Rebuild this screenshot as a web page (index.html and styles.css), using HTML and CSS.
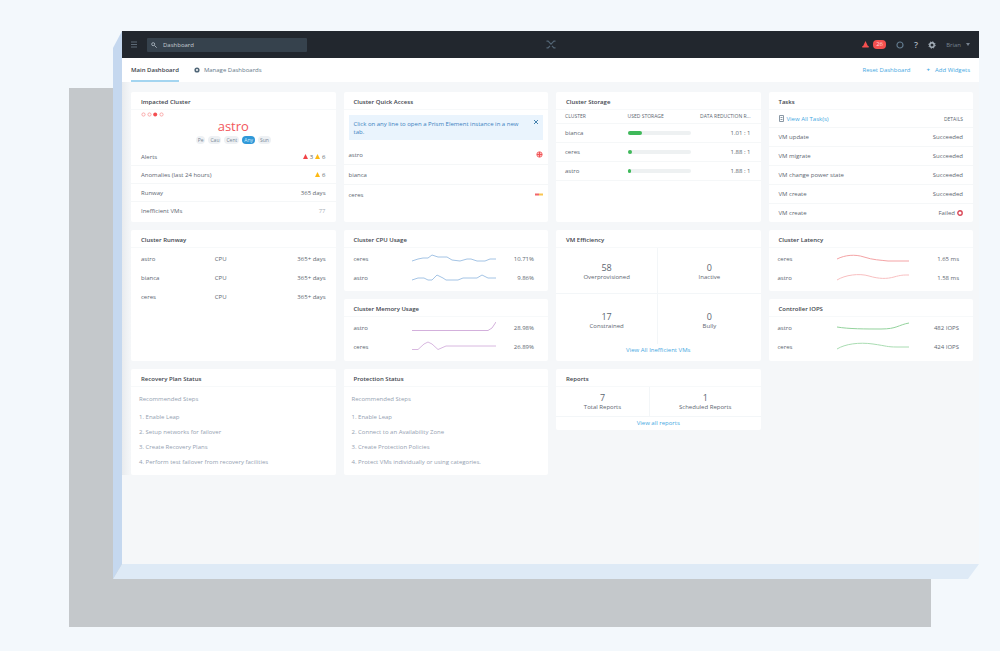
FILE: index.html
```html
<!DOCTYPE html>
<html lang="en">
<head>
<meta charset="utf-8">
<title>Main Dashboard</title>
<link rel="stylesheet" href="styles.css">
</head>
<body>
<div class="stage">
<div class="window">
  <header class="topbar">
    <button class="icon-btn" aria-label="Menu"><svg width="6" height="7" viewBox="0 0 6 7"><path d="M0 1h6M0 3.5h6M0 6h6" stroke="#5d6a77"/></svg></button>
    <div class="search">
      <svg width="6" height="6" viewBox="0 0 6 6" fill="none" stroke="#a0abb5"><circle cx="2.2" cy="2.2" r="1.5"/><path d="M3.4 3.4L5.7 5.7"/></svg>
      <input type="text" value="Dashboard" aria-label="Search">
    </div>
    <svg class="logo" width="10" height="9" viewBox="0 0 10 9" fill="none" stroke="#536575" stroke-width="1.2"><path d="M.5 1.2h1.6L5 4.2l2.9-3h1.6M.5 7.8h1.6L4 5.8M9.5 7.8H7.9L6 5.8"/></svg>
    <div class="tools">
      <button class="icon-btn alarm" aria-label="Alerts"><svg width="7" height="7" viewBox="0 0 7 7"><path d="M3.5 0L6 5.3H1zM.3 5h6.4v1.4H.3z" fill="#f5504f"/></svg><span class="badge">26</span></button>
      <button class="icon-btn" aria-label="Tasks"><svg width="8" height="8" viewBox="0 0 8 8"><circle cx="4" cy="4" r="3" fill="none" stroke="#627a8d" stroke-width="1.2"/></svg></button>
      <button class="icon-btn help" aria-label="Help">?</button>
      <button class="icon-btn" aria-label="Settings"><svg width="8" height="8" viewBox="0 0 8 8" fill="none" stroke="#a9b4be"><circle cx="4" cy="4" r="2.2" stroke-width="1.4"/><circle cx="4" cy="4" r="3.2" stroke-dasharray="1.25 1.25"/></svg></button>
      <button class="icon-btn user">Brian <svg width="4" height="3" viewBox="0 0 4 3"><path d="M0 0h4L2 3z" fill="#76828e"/></svg></button>
    </div>
  </header>
  <nav class="tabs">
    <a class="tab active" href="#main">Main Dashboard</a>
    <a class="tab" href="#manage"><svg width="6" height="6" viewBox="0 0 6 6"><circle cx="3" cy="3" r="1.8" fill="none" stroke="#516778" stroke-width="1.6"/></svg>Manage Dashboards</a>
    <span class="spacer"></span>
    <a class="link" href="#reset">Reset Dashboard</a>
    <a class="link add" href="#add"><b>+</b>Add Widgets</a>
  </nav>
  <main class="grid">
    <section class="card double">
      <h2>Impacted Cluster</h2>
      <div class="impact">
        <svg width="23" height="5" viewBox="0 0 23 5" fill="none" stroke="#f9a9a9"><circle cx="2.5" cy="2.5" r="1.6"/><circle cx="8.5" cy="2.5" r="1.6"/><circle cx="14.2" cy="2.5" r="2" fill="#f44d50" stroke="none"/><circle cx="20.5" cy="2.5" r="1.6"/></svg>
        <p class="cluster">astro</p>
        <div class="pills"><button>Pe</button><button>Cau</button><button>Cent</button><button class="on">Any</button><button>Sun</button></div>
      </div>
      <ul class="rows tight">
        <li><span>Alerts</span><span class="marks"><svg width="5" height="5" viewBox="0 0 5 5"><path d="M2.5 0L5 5H0z" fill="#f14347"/></svg>3<svg width="5" height="5" viewBox="0 0 5 5"><path d="M2.5 0L5 5H0z" fill="#fdb913"/></svg>6</span></li>
        <li><span>Anomalies (last 24 hours)</span><span class="marks"><svg width="5" height="5" viewBox="0 0 5 5"><path d="M2.5 0L5 5H0z" fill="#fdb913"/></svg>6</span></li>
        <li><span>Runway</span><span>365 days</span></li>
        <li><span>Inefficient VMs</span><span class="pale">77</span></li>
      </ul>
    </section>

    <section class="card double">
      <h2>Cluster Quick Access</h2>
      <div class="notice"><p>Click on any line to open a Prism Element instance in a new tab.</p><button aria-label="Close"><svg width="4" height="4" viewBox="0 0 4 4"><path d="M0 0l4 4M4 0L0 4" stroke="#4682ae"/></svg></button></div>
      <ul class="rows quick">
        <li><span>astro</span><svg width="7" height="7" viewBox="0 0 7 7"><circle cx="3.5" cy="3.5" r="2.7" fill="#fbb" stroke="#f46e70"/><path d="M1 3.5h5M3.5 1v5" stroke="#ed5558"/></svg></li>
        <li><span>bianca</span></li>
        <li><span>ceres</span><svg width="8" height="3" viewBox="0 0 8 3"><path d="M0 1.5h4" stroke="#f2666b" stroke-width="2"/><path d="M4 1.5h4" stroke="#f9c550" stroke-width="2"/></svg></li>
      </ul>
    </section>

    <section class="card double">
      <h2>Cluster Storage</h2>
      <table class="storage">
        <thead><tr><th>CLUSTER</th><th>USED STORAGE</th><th>DATA REDUCTION R...</th></tr></thead>
        <tbody>
          <tr><td>bianca</td><td><div class="meter"><div style="width:23%"></div></div></td><td>1.01 : 1</td></tr>
          <tr><td>ceres</td><td><div class="meter"><div style="width:7%"></div></div></td><td>1.88 : 1</td></tr>
          <tr><td>astro</td><td><div class="meter"><div style="width:5%"></div></div></td><td>1.88 : 1</td></tr>
        </tbody>
      </table>
    </section>

    <section class="card double">
      <h2>Tasks</h2>
      <div class="taskhead"><a class="link" href="#tasks"><svg width="5" height="7" viewBox="0 0 5 7"><path d="M.5.5h4v6h-4zM1.5 2.5h2M1.5 4.5h2" fill="none" stroke="#8a98a5"/></svg>View All Task(s)</a><span>DETAILS</span></div>
      <ul class="rows">
        <li><span>VM update</span><span>Succeeded</span></li>
        <li><span>VM migrate</span><span>Succeeded</span></li>
        <li><span>VM change power state</span><span>Succeeded</span></li>
        <li><span>VM create</span><span>Succeeded</span></li>
        <li><span>VM create</span><span class="marks">Failed <svg width="6" height="6" viewBox="0 0 6 6"><circle cx="3" cy="3" r="2.2" fill="#fff" stroke="#d94757" stroke-width="1.4"/></svg></span></li>
      </ul>
    </section>

    <section class="card double">
      <h2>Cluster Runway</h2>
      <ul class="rows runway">
        <li><span>astro</span><span>CPU</span><span>365+ days</span></li>
        <li><span>bianca</span><span>CPU</span><span>365+ days</span></li>
        <li><span>ceres</span><span>CPU</span><span>365+ days</span></li>
      </ul>
    </section>

    <section class="card">
      <h2>Cluster CPU Usage</h2>
      <ul class="rows sparks">
        <li><span>ceres</span><svg width="84" height="11" viewBox="0 0 84 11" stroke="#a4c4e5"><path d="M0 8L6 6L11 5L16 5L20 2L26 4H35L40 7L48 8L55 6H59L65 8H73L78 6H84"/></svg><span>10.71%</span></li>
        <li><span>astro</span><svg width="84" height="11" viewBox="0 0 84 11" stroke="#a4c4e5"><path d="M0 8L6 6H12L16 8H20L25 3L31 6L34 8H46L51 6H65L70 3L76 6H84"/></svg><span>9.86%</span></li>
      </ul>
    </section>

    <section class="card double">
      <h2>VM Efficiency</h2>
      <div class="stats four">
        <div class="stat"><strong>58</strong><span>Overprovisioned</span></div>
        <div class="stat"><strong>0</strong><span>Inactive</span></div>
        <div class="stat"><strong>17</strong><span>Constrained</span></div>
        <div class="stat"><strong>0</strong><span>Bully</span></div>
      </div>
      <a class="link foot" href="#vms">View All Inefficient VMs</a>
    </section>

    <section class="card">
      <h2>Cluster Latency</h2>
      <ul class="rows sparks wide">
        <li><span>ceres</span><svg width="72" height="11" viewBox="0 0 72 11" stroke="#f4a3a5"><path d="M0 6C8 2 18 1 27 4S43 7 51 8H72"/></svg><span>1.65 ms</span></li>
        <li><span>astro</span><svg width="72" height="11" viewBox="0 0 72 11" stroke="#f8bfc0"><path d="M0 8C8 3 22 1 32 4S50 7 57 5S66 3 72 3"/></svg><span>1.58 ms</span></li>
      </ul>
    </section>

    <section class="card">
      <h2>Cluster Memory Usage</h2>
      <ul class="rows sparks">
        <li><span>astro</span><svg width="84" height="11" viewBox="0 0 84 11" stroke="#d3b0dc"><path d="M0 8.5H76L80 6L84 0"/></svg><span>28.98%</span></li>
        <li><span>ceres</span><svg width="84" height="11" viewBox="0 0 84 11" stroke="#d8b8e0"><path d="M0 8.5H6L12 3L16 1L20 3L26 8.5L34 5H84"/></svg><span>26.89%</span></li>
      </ul>
    </section>

    <section class="card">
      <h2>Controller IOPS</h2>
      <ul class="rows sparks wide">
        <li><span>astro</span><svg width="72" height="11" viewBox="0 0 72 11" stroke="#93d29c"><path d="M0 5C12 7 28 7 44 7S61 3 72 1"/></svg><span>482 IOPS</span></li>
        <li><span>ceres</span><svg width="72" height="11" viewBox="0 0 72 11" stroke="#a9dcb2"><path d="M0 8C8 3 22 1 36 3S50 6 60 6H72"/></svg><span>424 IOPS</span></li>
      </ul>
    </section>

    <section class="card tall">
      <h2>Recovery Plan Status</h2>
      <div class="steps"><p>Recommended Steps</p>
        <ol><li>1. Enable Leap</li><li>2. Setup networks for failover</li><li>3. Create Recovery Plans</li><li>4. Perform test failover from recovery facilities</li></ol></div>
    </section>

    <section class="card tall">
      <h2>Protection Status</h2>
      <div class="steps"><p>Recommended Steps</p>
        <ol><li>1. Enable Leap</li><li>2. Connect to an Availability Zone</li><li>3. Create Protection Policies</li><li>4. Protect VMs individually or using categories.</li></ol></div>
    </section>

    <section class="card">
      <h2>Reports</h2>
      <div class="stats two">
        <div class="stat"><strong>7</strong><span>Total Reports</span></div>
        <div class="stat"><strong>1</strong><span>Scheduled Reports</span></div>
      </div>
      <a class="link foot" href="#reports">View all reports</a>
    </section>
  </main>
</div>
</div>
</body>
</html>
```
FILE: styles.css
```css
* { box-sizing: border-box; }
body { margin: 0; background: #f3f8fc; font: 6px/8px "Open Sans", "Noto Sans", sans-serif; color: #5c6670; }
h2, p, ul, ol { margin: 0; padding: 0; }
ul, ol { list-style: none; }
button { margin: 0; padding: 0; border: 0; background: none; font: inherit; color: inherit; }
a { text-decoration: none; color: inherit; }
svg { display: block; flex: none; }

.stage { position: relative; min-height: 100vh; padding: 31px 21px 87px 122px; isolation: isolate; }
.stage::before { content: ""; position: absolute; z-index: -1; left: 69px; top: 88px; right: 69px; bottom: 24px; background: #c4c8cb; }
.window { position: relative; min-height: calc(100vh - 118px); background: #f5f7f9; }
.window::before { content: ""; position: absolute; left: -9px; top: 0; bottom: -15px; width: 9px; background: #c5d8ef; clip-path: polygon(100% 0, 100% calc(100% - 15px), 0 100%, 0 17px); }
.window::after { content: ""; position: absolute; left: -9px; right: 0; bottom: -15px; height: 15px; background: #deeaf6; clip-path: polygon(9px 0, 100% 0, calc(100% - 11px) 100%, 0 100%); }

.topbar { display: flex; align-items: center; height: 27px; padding: 0 9px; background: #22272e; color: #76828e; position: relative; }
.icon-btn { display: flex; align-items: center; gap: 4px; }
.search { display: flex; align-items: center; gap: 6px; width: 160px; height: 14px; margin-left: 10px; padding: 0 4px; border-radius: 1px; background: #36424d; }
.search input { flex: 1; min-width: 0; padding: 0; border: 0; outline: 0; background: none; font: inherit; color: #c3cbd2; }
.logo { position: absolute; left: 50%; top: 9px; margin-left: -5px; }
.tools { display: flex; align-items: center; gap: 10px; margin-left: auto; }
.badge { padding: 0 3px; border-radius: 4px; background: #f5504f; color: #ffd9d9; line-height: 9px; }
.help { font-size: 9px; font-weight: 600; color: #a9b4be; }
.user { gap: 5px; }

.tabs { display: flex; align-items: stretch; height: 24px; padding: 0 9px; background: #fff; }
.tab { display: flex; align-items: center; gap: 4px; color: #64788a; }
.tab + .tab { margin-left: 15px; }
.tab.active { color: #3c444c; font-weight: 600; box-shadow: inset 0 -2px #a4d5f0; }
.spacer { flex: 1; }
.link { color: #45a8e2; }
.tabs .link { align-self: center; }
.add { display: flex; gap: 5px; margin-left: 16px; }

.grid { display: grid; grid-template-columns: repeat(4, minmax(0, 1fr)); grid-template-rows: 61px 61px 61px 62px 61px 37px; gap: 8px; padding: 10px 6px 0 9px; background: linear-gradient(90deg, #e8ebee, #f5f7f9 9px); }
.card { display: flex; flex-direction: column; min-width: 0; border-radius: 2px; background: #fff; overflow: hidden; }
.double, .tall { grid-row-end: span 2; }
h2 { height: 18px; padding: 1px 10px 0; font-size: 6px; font-weight: 600; line-height: 18px; color: #3e454d; border-bottom: 1px solid #f7f9fa; flex: none; }

.rows li { display: flex; align-items: center; justify-content: space-between; height: 19px; padding: 0 10px; border-bottom: 1px solid #f5f7f8; }
.rows li:last-child { border-bottom-color: transparent; }
.tight li { height: 18px; }
.marks { display: flex; align-items: center; gap: 2px; }
.pale { color: #a8b0b8; }

.impact { display: flex; flex-direction: column; height: 38px; padding: 2px 10px 0; }
.cluster { padding-top: 1px; text-align: center; font-size: 13px; line-height: 16px; color: #f2575b; }
.pills { display: flex; justify-content: center; gap: 3px; margin-top: 2px; }
.pills button { padding: 0 2px; border-radius: 4px; background: #eef1f4; color: #788795; font-size: 5px; line-height: 8px; }
.pills .on { background: #2f98d8; color: #d9effc; }

.notice { display: flex; justify-content: space-between; align-items: flex-start; height: 25px; margin: 5px; padding: 5px; background: #eaf4fd; color: #3b81c0; }
.notice p { width: 172px; }
.quick li { height: 20px; padding: 0 5px; }

.storage { width: 100%; border-collapse: collapse; table-layout: fixed; }
.storage th, .storage td { height: 19px; padding: 0; text-align: left; border-bottom: 1px solid #f5f7f8; }
.storage th { height: 13px; font-size: 5px; font-weight: 400; white-space: nowrap; }
.storage th:first-child, .storage td:first-child { width: 35%; padding-left: 9px; }
.storage th:nth-child(2) { width: 31%; }
.storage th:last-child, .storage td:last-child { text-align: right; padding-right: 10px; }
.meter { height: 4px; border-radius: 2px; background: #eef1f2; }
.meter div { height: 100%; border-radius: 2px; background: #3fb95a; }

.taskhead { display: flex; align-items: center; justify-content: space-between; height: 18px; padding: 0 10px; border-bottom: 1px solid #f5f7f8; font-size: 5px; flex: none; }
.taskhead .link { display: flex; align-items: center; gap: 3px; font-size: 6px; }

.runway { padding-top: 1px; }
.runway li { display: grid; grid-template-columns: 2fr 1fr 2fr; border: 0; }
.runway span:last-child { text-align: right; }

.sparks { padding-top: 1px; }
.sparks li { display: grid; grid-template-columns: 58px 1fr auto; padding: 0 14px 0 10px; border: 0; }
.sparks svg { fill: none; }
.sparks.wide li { grid-template-columns: 59px 1fr auto; padding-left: 9px; }

.stats { display: grid; flex: 1; }
.four { grid-template-columns: 1fr 1fr; grid-template-rows: 46px 1fr; }
.two { grid-template-columns: 94px 1fr; border-bottom: 1px solid #f3f6f8; }
.stat { display: flex; flex-direction: column; align-items: center; justify-content: center; }
.stat strong { font-size: 9px; font-weight: 400; line-height: 11px; }
.stat:nth-child(odd) { border-right: 1px solid #f3f6f8; }
.four .stat { padding-top: 2px; }
.four .stat:nth-child(-n+2) { border-bottom: 1px solid #f3f6f8; }
.foot { text-align: center; line-height: 13px; }
.four + .foot { padding: 0 0 4px; }

.steps { padding: 8px 8px 0; color: #94a1b1; }
.steps p { margin-bottom: 7px; line-height: 8px; }
.steps li { line-height: 15px; }
```
